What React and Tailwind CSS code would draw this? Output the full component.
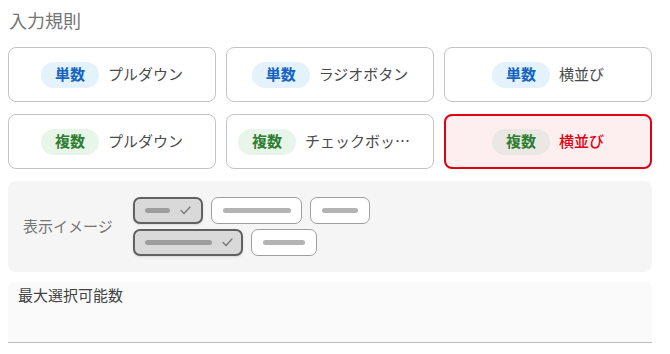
import React from 'react';

const font = { fontFamily: '"Noto Sans CJK JP", "Noto Sans", sans-serif' };

const rules = [
  { kind: '単数', label: 'プルダウン' },
  { kind: '単数', label: 'ラジオボタン' },
  { kind: '単数', label: '横並び' },
  { kind: '複数', label: 'プルダウン' },
  { kind: '複数', label: 'チェックボックス' },
  { kind: '複数', label: '横並び', selected: true },
];

const Check = () => (
  <svg width="11" height="9" viewBox="0 0 11 9" fill="none">
    <path d="M1 4.5 L4 7.5 L10 1" stroke="#757575" strokeWidth="1.2" strokeLinecap="round" strokeLinejoin="round" />
  </svg>
);

const Chip = ({ width, bar, selected }) => (
  <div
    className={
      selected
        ? 'h-[27px] rounded-[7px] border-2 border-[#616161] bg-[#d9d9d9] flex items-center pl-[10px] gap-[10px] shadow-sm'
        : 'h-[27px] rounded-[7px] border border-[#9e9e9e] bg-white flex items-center justify-center'
    }
    style={{ width }}
  >
    <div
      className={selected ? 'h-[5px] rounded-full bg-[#9e9e9e]' : 'h-[5px] rounded-full bg-[#b3b3b3]'}
      style={{ width: bar }}
    />
    {selected && <Check />}
  </div>
);

const RuleCard = ({ rule }) => {
  const single = rule.kind === '単数';
  const badge = single
    ? 'bg-[#e3f2fd] text-[#1565c0]'
    : rule.selected
    ? 'bg-[#ebe8e3] text-[#2e7d32]'
    : 'bg-[#e8f5e9] text-[#2e7d32]';
  return (
    <div
      className={
        rule.selected
          ? 'h-[55px] rounded-[8px] border-2 border-[#e00012] bg-[#fdeff0] flex items-center justify-center px-[11px] min-w-0'
          : 'h-[55px] rounded-[8px] border-[1.5px] border-[#c4c4c4] bg-white flex items-center justify-center px-[11px] min-w-0'
      }
    >
      <span className={`shrink-0 h-[26px] px-[14px] rounded-full flex items-center text-[15px] font-bold ${badge}`}>
        {rule.kind}
      </span>
      <span
        className={
          rule.selected
            ? 'ml-[9px] text-[15px] font-medium text-[#e00012] truncate'
            : 'ml-[9px] text-[15px] text-[#4a4a4a] truncate'
        }
      >
        {rule.label}
      </span>
    </div>
  );
};

export default function App() {
  return (
    <div className="w-[670px] h-[354px] overflow-hidden bg-white pl-[8px] pr-[18px]" style={font}>
      <div className="pt-[7px] pl-[1px] text-[18px] leading-[26px] text-[#757575]">入力規則</div>

      <div className="mt-[14px] grid grid-cols-3 gap-x-[10px] gap-y-[12px]">
        {rules.map((r, i) => (
          <RuleCard key={i} rule={r} />
        ))}
      </div>

      {/* 表示イメージ */}
      <div className="mt-[12px] h-[91px] rounded-[8px] bg-[#f5f5f5] flex items-center pl-[15px]">
        <span className="text-[15px] text-[#757575] w-[110px] shrink-0">表示イメージ</span>
        <div className="flex flex-col gap-[5px]">
          <div className="flex gap-[8px]">
            <Chip width={70} bar={25} selected />
            <Chip width={91} bar={68} />
            <Chip width={60} bar={36} />
          </div>
          <div className="flex gap-[8px]">
            <Chip width={110} bar={67} selected />
            <Chip width={66} bar={42} />
          </div>
        </div>
      </div>

      {/* 最大選択可能数 */}
      <div className="mt-[10px] h-[61px] rounded-t-[5px] bg-[#fafafa] border-b-[1.5px] border-[#bdbdbd] pl-[10px] pt-0">
        <span className="text-[15px] leading-[22px] text-[#424242]">最大選択可能数</span>
      </div>
    </div>
  );
}
